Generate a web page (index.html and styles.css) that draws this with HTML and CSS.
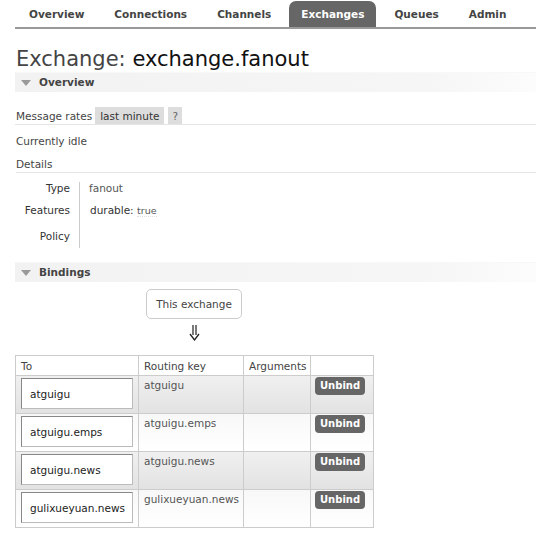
FILE: index.html
```html
<!DOCTYPE html>
<html>
<head>
<meta charset="utf-8">
<link rel="stylesheet" href="styles.css">
</head>
<body>
<div class="header">
  <ul class="tabs">
    <li><a>Overview</a></li>
    <li><a>Connections</a></li>
    <li><a>Channels</a></li>
    <li class="active"><a>Exchanges</a></li>
    <li><a>Queues</a></li>
    <li><a>Admin</a></li>
  </ul>
</div>

<div class="main">
  <h1>Exchange: <b>exchange.fanout</b></h1>

  <div class="section">
    <h2><span class="tri"></span>Overview</h2>
    <div class="rates">
      <span class="label">Message rates</span>
      <span class="pill">last minute</span>
      <span class="pill help">?</span>
    </div>
    <p class="idle">Currently idle</p>
    <h3>Details</h3>
    <table class="facts">
      <tr class="r1"><th>Type</th><td>fanout</td></tr>
      <tr class="r2"><th>Features</th><td class="feat">durable: <abbr>true</abbr></td></tr>
      <tr class="r3"><th>Policy</th><td></td></tr>
    </table>
  </div>

  <div class="section">
    <h2><span class="tri"></span>Bindings</h2>
    <div class="flow">
      <div class="this">This exchange</div>
      <div class="arrow">
        <svg width="11" height="16" viewBox="0 0 11 16">
          <path d="M4 0V10M7 0V10" stroke="#222" stroke-width="1.2" fill="none"/>
          <path d="M1 9L5.5 15L10 9" stroke="#222" stroke-width="1.3" fill="none"/>
        </svg>
      </div>
    </div>
    <table class="list">
      <colgroup>
        <col class="c-to"><col class="c-key"><col class="c-args"><col class="c-act">
      </colgroup>
      <thead>
        <tr><th>To</th><th>Routing key</th><th>Arguments</th><th></th></tr>
      </thead>
      <tbody>
        <tr class="alt1"><td><span class="dest">atguigu</span></td><td>atguigu</td><td></td><td><button>Unbind</button></td></tr>
        <tr class="alt2"><td><span class="dest">atguigu.emps</span></td><td>atguigu.emps</td><td></td><td><button>Unbind</button></td></tr>
        <tr class="alt1"><td><span class="dest">atguigu.news</span></td><td>atguigu.news</td><td></td><td><button>Unbind</button></td></tr>
        <tr class="alt2"><td><span class="dest">gulixueyuan.news</span></td><td>gulixueyuan.news</td><td></td><td><button>Unbind</button></td></tr>
      </tbody>
    </table>
  </div>
</div>
</body>
</html>
```
FILE: styles.css
```css
html, body {
  margin: 0;
  padding: 0;
  background: #fff;
}

body {
  font-family: "DejaVu Sans", Verdana, sans-serif;
  font-size: 10.5px;
  color: #444;
  width: 536px;
  overflow: hidden;
}

/* top navigation */
.header {
  padding-left: 15px;
}

.tabs {
  list-style: none;
  margin: 0;
  padding: 1px 0 0 2px;
  display: flex;
  border-bottom: 2px solid #999;
}

.tabs li {
  margin-right: 6px;
}

.tabs li a {
  display: block;
  height: 26px;
  line-height: 27px;
  padding: 0 12px;
  font-weight: bold;
  font-size: 10.5px;
  color: #444;
  border-radius: 7px 7px 0 0;
}

.tabs li.active a {
  background: #666;
  color: #fff;
}

/* page body */
.main {
  padding-left: 15px;
}

h1 {
  margin: 18px 0 0 1px;
  font-size: 21px;
  font-weight: normal;
  color: #444;
  line-height: 25px;
  white-space: nowrap;
}

h1 b {
  font-weight: normal;
  color: #111;
}

.section h2 {
  margin: 0;
  height: 19px;
  line-height: 19px;
  font-size: 10.5px;
  font-weight: bold;
  color: #444;
  background: linear-gradient(to right, #f2f2f2 0%, #f6f6f6 80%, #fcfcfc 100%);
  border-top: 1px solid #f8f8f8;
  display: flex;
  align-items: center;
}

.tri {
  width: 0;
  height: 0;
  border-left: 5px solid transparent;
  border-right: 5px solid transparent;
  border-top: 6px solid #999;
  margin: 0 8px 0 6px;
}

.rates {
  margin-top: 15px;
  display: flex;
  align-items: center;
  gap: 3px;
  border-bottom: 1px solid #e4e4e4;
  padding-bottom: 0;
}

.label {
  margin-left: 1px;
}

.pill {
  background: #ddd;
  padding: 0 5px;
  height: 17px;
  line-height: 18px;
  color: #333;
}

.pill.help {
  padding: 0 4px;
  margin-left: 1px;
  color: #666;
}

.idle {
  margin: 10px 0 0 1px;
  line-height: 12px;
}

h3 {
  margin: 11px 0 0 1px;
  font-size: 10.5px;
  font-weight: normal;
  line-height: 12px;
  padding-bottom: 2px;
  border-bottom: 1px solid #e4e4e4;
}

.facts {
  border-collapse: collapse;
  margin: 9px 0 14px 0;
}

.facts th,
.facts td {
  padding: 0;
  vertical-align: top;
  line-height: 12px;
}

.facts th {
  font-weight: normal;
  text-align: right;
  width: 55px;
  padding-right: 9px;
  color: #333;
  border-right: 1px solid #ccc;
}

.facts td {
  padding-left: 9px;
  color: #555;
}

.facts .r1 th { height: 22px; }
.facts .r2 th { height: 26px; }
.facts .r3 th { height: 18px; }

.facts td.feat {
  color: #333;
  padding-left: 10px;
}

.facts abbr {
  font-size: 9.5px;
  color: #555;
  text-decoration: none;
  border-bottom: 1px dotted #e0e0e0;
}

/* binding diagram */
.flow {
  width: 358px;
  display: flex;
  flex-direction: column;
  align-items: center;
  padding-top: 7px;
}

.this {
  border: 1px solid #ccc;
  border-radius: 5px;
  padding: 0 9px;
  height: 28px;
  line-height: 28px;
}

.arrow {
  height: 26px;
  display: flex;
  align-items: center;
  justify-content: center;
  padding-left: 1px;
}

.arrow svg {
  display: block;
  margin-top: 1px;
}

.list {
  margin-top: 10px;
  border-collapse: collapse;
  border: 1px solid #ccc;
  table-layout: fixed;
  width: 358px;
}

.list col.c-to { width: 123px; }
.list col.c-key { width: 105px; }
.list col.c-args { width: 67px; }
.list col.c-act { width: 63px; }

.list th {
  font-weight: normal;
  text-align: left;
  color: #444;
  height: 19px;
  padding: 0 5px;
  border: 1px solid #ccc;
  vertical-align: middle;
}

.list td {
  border: 1px solid #ccc;
  vertical-align: top;
  padding: 3px 5px 0 5px;
  color: #555;
  white-space: nowrap;
  overflow: visible;
  line-height: 12px;
}

.list tr.alt1 {
  background: linear-gradient(to bottom, #f0f0f0 0%, #e2e2e2 100%);
}

.list tr.alt2 {
  background: linear-gradient(to bottom, #f8f8f8 0%, #ffffff 100%);
}

.list td:first-child {
  padding: 2px 4px 4px 5px;
}

.dest {
  display: block;
  height: 29px;
  line-height: 30px;
  padding: 0 8px;
  background: #fff;
  border: 1px solid #888;
  border-right-color: #bbb;
  border-bottom-color: #bbb;
  color: #222;
  font-size: 10.5px;
  width: 94px;
  white-space: nowrap;
}

.list td:first-child + td {
  padding-top: 3px;
}

.list td:last-child {
  padding: 1px 4px 0 4px;
}

button {
  font-family: "DejaVu Sans", Verdana, sans-serif;
  font-size: 10px;
  font-weight: bold;
  color: #fff;
  background: #666;
  border: none;
  border-radius: 4px;
  height: 18px;
  padding: 0 5px;
  line-height: 18px;
  display: block;
}
```
